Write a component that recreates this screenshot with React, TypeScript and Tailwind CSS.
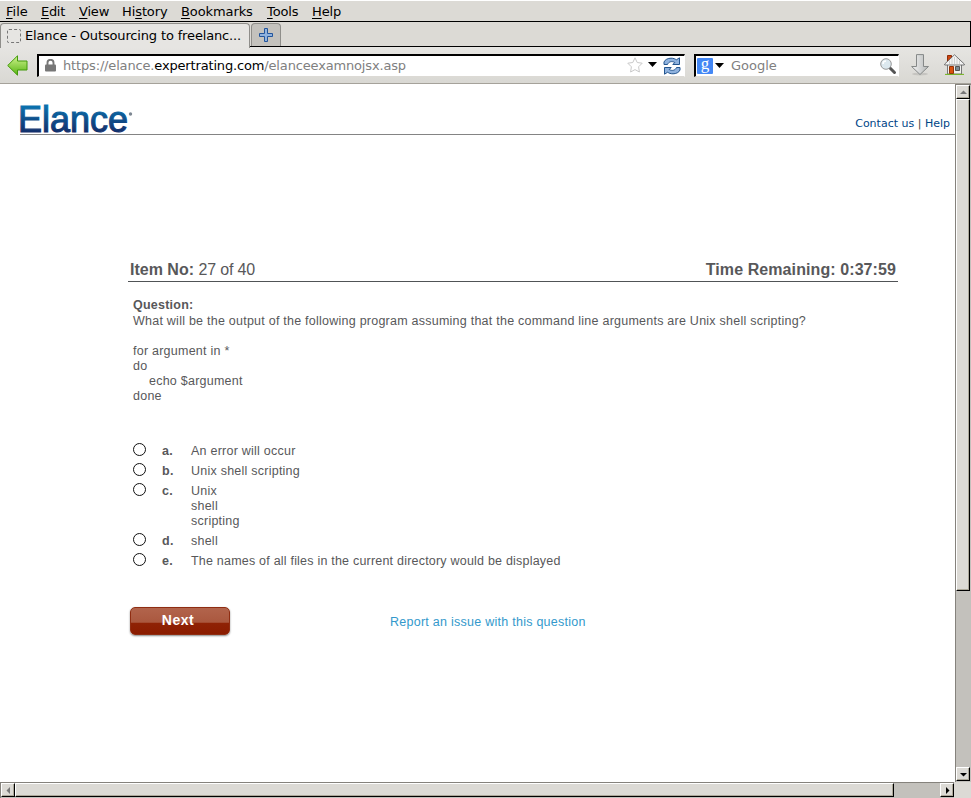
import React from "react";

const ui = "font-['DejaVu_Sans',sans-serif]";
const raised = "bg-[#dcdad5] border-t border-l border-white border-r-[1px] border-b-[1px] border-r-black border-b-black shadow-[inset_-1px_-1px_0_#aca899]";

function Menu({ k, pre = "", rest, w }: { k: string; pre?: string; rest: string; w: string }) {
  return <span className={w}>{pre}<span className="underline underline-offset-[2px] decoration-1">{k}</span>{rest}</span>;
}

function MenuBar() {
  return (
    <div className="flex h-[21px] shrink-0 border-t border-white bg-[#dcdad5] pl-[6px] text-[13px] leading-[21px] text-black whitespace-nowrap">
      <Menu k="F" rest="ile" w="w-[35px]" />
      <Menu k="E" rest="dit" w="w-[38px] tracking-[-0.3px]" />
      <Menu k="V" rest="iew" w="w-[43px] tracking-[-0.2px]" />
      <Menu pre="Hi" k="s" rest="tory" w="w-[59px] tracking-[-0.1px]" />
      <Menu k="B" rest="ookmarks" w="w-[86px] tracking-[-0.1px]" />
      <Menu k="T" rest="ools" w="w-[45px] tracking-[-0.1px]" />
      <Menu k="H" rest="elp" w="w-[40px] tracking-[-0.1px]" />
    </div>
  );
}

function TabBar() {
  return (
    <div className="flex h-[26px] shrink-0 border-t border-black bg-[#dcdad5]">
      <div className="relative mt-[1px] flex h-[25px] w-[250px] items-center rounded-t-[4px] border-l border-r border-t border-[#8f8e8a] bg-[#e6e5e2] pl-[6px] text-[13px] text-black">
        <span className="mr-[4px] h-[14px] w-[14px] rounded-[2px] border border-dashed border-[#777]" />
        <span className="w-[222px] whitespace-nowrap tracking-[-0.15px]">Elance - Outsourcing to freelanc...</span>
      </div>
      <div className="flex flex-1 border-b border-r border-black">
        <div className="mt-[1px] ml-[1px] flex h-[23px] w-[30px] items-center justify-center rounded-t-[4px] border-l border-r border-t border-[#8f8e8a] bg-[#c4c2bd]">
          <svg width="14" height="14" viewBox="0 0 14 14"><path d="M5.5.5h3v5h5v3h-5v5h-3v-5h-5v-3h5z" fill="#8fb2de" stroke="#23559c" /></svg>
        </div>
      </div>
    </div>
  );
}

function Caret() {
  return <svg width="9" height="5" viewBox="0 0 9 5"><path d="M0 0h9L4.500 5z" fill="#000" /></svg>;
}

function NavBar() {
  return (
    <div className="flex h-[37px] shrink-0 border-b border-[#a5a29a] bg-gradient-to-b from-[#e6e5e2] to-[#d9d8d3] text-[13px]">
      <svg className="mt-[8px] ml-[7px]" width="21" height="21" viewBox="0 0 21 21">
        <defs><linearGradient id="green" x1="0" y1="0" x2="0" y2="1"><stop stopColor="#d1f38f" /><stop offset="1" stopColor="#56b411" /></linearGradient></defs>
        <path d="M.7 10.500 10.500.8V6h9.500v9h-9.500v5.200z" fill="url(#green)" stroke="#439a0b" />
      </svg>
      <div className="mt-[7px] ml-[9px] flex h-[23px] w-[648px] items-center border-l-2 border-t-2 border-b border-r border-black border-b-[#dcdad5] border-r-white bg-white">
        <svg className="ml-[6px] -mt-px" width="11" height="13" viewBox="0 0 11 13"><path d="M2.500 6V3.800a3 3 0 0 1 6 0V6" fill="none" stroke="#777" strokeWidth="1.900" /><rect y="5.500" width="11" height="7" rx="1" fill="#777" /></svg>
        <span className="ml-[7px] flex-1 whitespace-nowrap text-[#808080] tracking-[-0.16px]">https://elance.<span className="text-black">expertrating.com</span>/elanceexamnojsx.asp</span>
        <svg className="mr-[5px] -mt-[3px]" width="16" height="16" viewBox="0 0 16 16"><path d="m8 .8 2.200 4.700 5 .7-3.600 3.600.8 5.200L8 12.600 3.600 15l.8-5.200L.8 6.200l5-.7z" fill="#fff" stroke="#c9c9c9" /></svg>
        <span className="-mt-[4px] flex items-end"><Caret /></span>
        <svg className="ml-[6px] mr-[3px] -mt-px" width="18" height="18" viewBox="0 0 18 18" fill="#8fb2de" stroke="#23558f" strokeWidth="1" strokeLinejoin="round"><path d="M1 7.500V5C2 2.500 5 1.200 8 1.200c2.500 0 4 .6 5.300 1.600L16.500.8v6.700H9.800l2-2C9 3.800 5.800 4.500 4.500 7.500z" /><path d="M17 10.500V13c-1 2.500-4 3.800-7 3.800-2.500 0-4-.6-5.300-1.600L1.500 17.200v-6.700h6.700l-2 2c2.800 1.700 6 1 7.300-2z" /></svg>
      </div>
      <div className="mt-[7px] ml-[9px] flex h-[23px] w-[205px] items-center border-l-2 border-t-2 border-b border-r border-black border-b-[#dcdad5] border-r-white bg-white">
        <span className="ml-px flex h-[16px] w-[16px] items-center justify-center rounded-[1px] bg-[#4387f5] -mt-px font-['Liberation_Serif',serif] text-[17px] leading-[14px] text-white"><span className="-mt-[3px]">g</span></span>
        <span className="ml-[2px] -mt-[2px] flex"><Caret /></span>
        <span className="ml-[7px] flex-1 text-[#808080]">Google</span>
        <svg className="mr-[1px] -mt-px" width="18" height="18" viewBox="0 0 18 18"><path d="m10.500 10.500 5 5" stroke="#555" strokeWidth="3" strokeLinecap="round" /><circle cx="7" cy="7" r="5.300" fill="#dce8ee" stroke="#999" /><path d="M4 7a3 3 0 0 1 3-3" stroke="#fff" strokeWidth="1.500" fill="none" /></svg>
      </div>
      <svg className="mt-[7px] ml-[12px]" width="18" height="22" viewBox="0 0 18 22"><defs><linearGradient id="gray" x1="0" x2="1"><stop stopColor="#f4f4f4" /><stop offset="1" stopColor="#b4b7b7" /></linearGradient></defs><ellipse cx="9" cy="20" rx="8" ry="1.500" fill="#c5c4c0" /><path d="M5.500.6h7v11.900h5L9 20.500.6 12.500h4.900z" fill="url(#gray)" stroke="#858888" /></svg>
      <svg className="mt-[7px] ml-[15px]" width="21" height="21" viewBox="0 0 21 21"><path d="M3.500 1.500h4V9h-4z" fill="#cc4612" stroke="#8f2b06" /><path d="M3.500 10 10.500 3l7 7v10h-14z" fill="#f0f0ee" stroke="#777" /><path d="M.7 11v-1L10.500.8 20.300 10v1h-3.600H4.300z" fill="#f4f4f4" stroke="#666" strokeWidth=".9" /><path d="M5.500 6.500V10M8 4v6m2.500-7v7M13 4v6m2.500-3.500V10" stroke="#c5c5c3" strokeWidth=".8" /><path d="M5.500 12.500h4v7h-4z" fill="#d9500e" stroke="#943207" /><path d="M11.500 12.500h4v4h-4z" fill="#7c8b92" stroke="#555" /><path d="M1 20.400h19" stroke="#73b51e" /></svg>
    </div>
  );
}

function Arrow({ d, off = false }: { d: string; off?: boolean }) {
  return <svg width="7" height="7" viewBox="0 0 7 7"><path d={d} fill={off ? "#777" : "#000"} /></svg>;
}

function Option({ label, children, h = "h-[20px]" }: { label: string; children: React.ReactNode; h?: string }) {
  return (
    <div className={"flex items-start " + h}>
      <span className="h-[13px] w-[13px] shrink-0 rounded-full border-[1.500px] border-[#111] bg-white" />
      <span className="ml-[16px] w-[29px] shrink-0 pt-px font-bold leading-[15px]">{label}.</span>
      <div className="pt-px leading-[15px] whitespace-nowrap">{children}</div>
    </div>
  );
}

function ExamPage() {
  return (
    <main className="min-w-0 flex-1 overflow-hidden bg-white font-['Liberation_Sans',Arial,sans-serif] text-[12.5px] text-[#58585a]">
      <header className="ml-[20px] flex h-[51px] items-end justify-between border-b border-[#848484] pr-[5px]">
        <svg width="116" height="34" viewBox="0 0 116 34" className="-ml-px overflow-visible">
          <defs><linearGradient id="brand" x1="0" y1="0" x2="0" y2="1"><stop offset=".2" stopColor="#0a70ad" /><stop offset=".85" stopColor="#132c68" /></linearGradient></defs>
          <text x="-1" y="31.500" textLength="110" lengthAdjust="spacingAndGlyphs" fill="url(#brand)" stroke="url(#brand)" strokeWidth="1.100" className="font-['Liberation_Sans',sans-serif] text-[36px]">Elance</text>
          <circle cx="111.500" cy="14" r="1.700" fill="#7d8792" />
        </svg>
        <div className="pb-[2px] font-['DejaVu_Sans',sans-serif] text-[11px] leading-[16px] text-[#004586]">Contact us <span className="text-[#444]">|</span> Help</div>
      </header>
      <section className="ml-[128px] mt-[124px] w-[770px]">
        <div className="flex h-[23px] justify-between border-b border-[#505356] pr-[2px] pl-[2px] text-[16px] leading-[22px]">
          <div><b>Item No:</b> <span className="tracking-[-0.15px]">27 of 40</span></div>
          <b className="tracking-[0.09px]">Time Remaining: 0:37:59</b>
        </div>
        <div className="pl-[5px] pt-[15px] leading-[15px] tracking-[0.24px] whitespace-nowrap">
          <div className="h-[16px] font-bold leading-[16px]">Question:</div>
          <div className="h-[16px] leading-[16px]">What will be the output of the following program assuming that the command line arguments are Unix shell scripting?</div>
          <div className="mt-[15px]">for argument in *</div>
          <div>do</div>
          <div className="pl-[16px]">echo $argument</div>
          <div>done</div>
          <div className="mt-[39px]">
            <Option label="a">An error will occur</Option>
            <Option label="b">Unix shell scripting</Option>
            <Option label="c" h="h-[50px]">Unix<br />shell<br />scripting</Option>
            <Option label="d">shell</Option>
            <Option label="e"><span className="tracking-[0.21px]">The names of all files in the current directory would be displayed</span></Option>
          </div>
        </div>
        <div className="mt-[34px] ml-[2px] flex items-start">
          <button className="h-[28px] w-[100px] rounded-[5px] border border-[#8f2d12] bg-[linear-gradient(#b2644c_0,#aa583f_55%,#8f2205_58%,#8b1c00_100%)] pr-[4px] pb-[2px] text-[14px] font-bold tracking-[.5px] text-white shadow-[0_1px_2px_#888]">Next</button>
          <a className="ml-[160px] pt-[8px] leading-[15px] tracking-[.26px] text-[#3399cc]">Report an issue with this question</a>
        </div>
      </section>
    </main>
  );
}

export default function App() {
  return (
    <div className={"flex h-[798px] w-[971px] flex-col overflow-hidden bg-[#dcdad5] " + ui}>
      <MenuBar /><TabBar /><NavBar />
      <div className="flex h-[698px] shrink-0">
        <ExamPage />
        <div className="flex w-[16px] flex-col border-l border-t border-[#85827c] bg-[#c3c1bc] pr-px pb-px">
          <div className={"flex h-[14px] items-center justify-center " + raised}><Arrow off d="M0 5h7L3.500 1.500z" /></div>
          <div className={"h-[492px] " + raised} />
          <div className="flex-1" />
          <div className={"flex h-[14px] items-center justify-center " + raised}><Arrow d="M0 2h7L3.500 5.500z" /></div>
        </div>
      </div>
      <div className="flex h-[16px]">
        <div className="flex h-[16px] w-[954px] border-l border-t border-[#85827c] bg-[#c3c1bc] pb-px">
          <div className={"flex w-[14px] items-center justify-center " + raised}><Arrow off d="M5 0v7L1.500 3.500z" /></div>
          <div className={"w-[879px] " + raised} />
          <div className="flex-1" />
          <div className={"flex w-[14px] items-center justify-center " + raised}><Arrow d="M2 0v7l3.500-3.500z" /></div>
        </div>
      </div>
    </div>
  );
}
